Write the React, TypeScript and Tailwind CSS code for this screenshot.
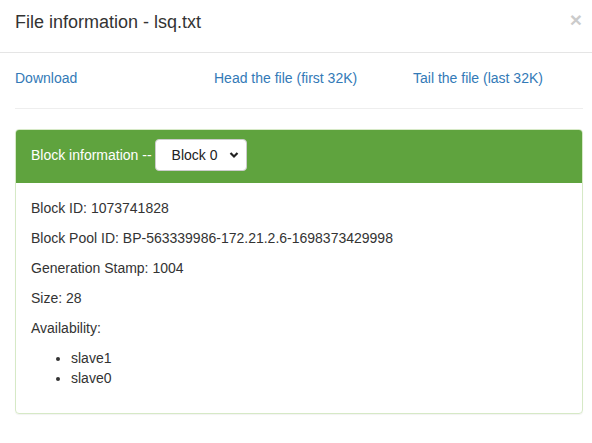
export default function App() {
  const lines = [
    "Block ID: 1073741828",
    "Block Pool ID: BP-563339986-172.21.2.6-1698373429998",
    "Generation Stamp: 1004",
    "Size: 28",
    "Availability:",
  ];

  return (
    <div className="h-[443px] w-[592px] overflow-hidden bg-white font-['Liberation_Sans',Arial,sans-serif] text-[14px] leading-[20px] text-[#333]">
      {/* modal header */}
      <div className="flex h-[53px] items-start justify-between border-b border-[#e5e5e5] pl-[15px] pr-[10px] pt-[9px]">
        <h4 className="text-[18px] leading-[26px] text-[#333]">File information - lsq.txt</h4>
        <button
          type="button"
          className="mt-[1px] text-[21px] font-bold leading-[20px] text-[#333] opacity-25"
        >
          ×
        </button>
      </div>

      {/* modal body */}
      <div className="pl-[15px] pr-[9px] pt-[15px]">
        <div className="grid grid-cols-[199px_199px_1fr]">
          <a className="text-[#337ab7]" href="#">Download</a>
          <a className="text-[#337ab7]" href="#">Head the file (first 32K)</a>
          <a className="text-[#337ab7]" href="#">Tail the file (last 32K)</a>
        </div>

        <hr className="mb-[20px] mt-[20px] border-t border-[#eee]" />

        <div className="rounded-[4px] border border-[#d6e9c6] shadow-[0_1px_1px_rgba(0,0,0,0.05)]">
          <div className="flex h-[53px] items-center gap-[3px] rounded-t-[3px] bg-[#5fa33e] px-[15px] pb-[3px] text-white">
            <span>Block information --</span>
            <div className="relative flex h-[32px] w-[92px] items-center rounded-[4px] border border-[#ccc] bg-white pl-[16px] text-[14px] text-[#555]">
              <span className="text-[#222]">Block 0</span>
              <svg
                className="absolute right-[7px] top-[11px]"
                width="10"
                height="8"
                viewBox="0 0 10 8"
                fill="none"
                stroke="#222"
                strokeWidth="2.2"
              >
                <path d="M1.5 2 L5 5.5 L8.5 2" />
              </svg>
            </div>
          </div>

          <div className="p-[15px]">
            {lines.map((line) => (
              <p key={line} className="mb-[10px]">
                {line}
              </p>
            ))}
            <ul className="mb-[10px] list-disc pl-[40px]">
              <li>slave1</li>
              <li>slave0</li>
            </ul>
          </div>
        </div>
      </div>
    </div>
  );
}
